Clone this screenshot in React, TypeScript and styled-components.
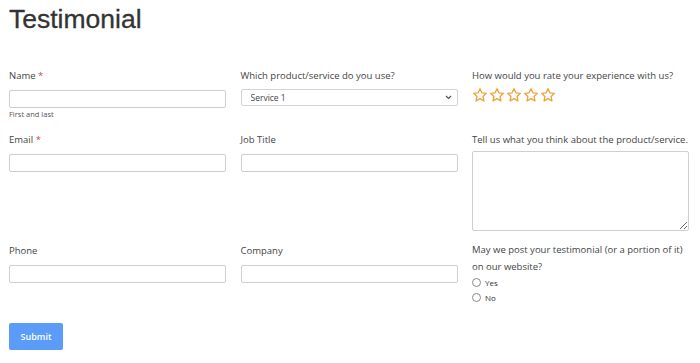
import React from "react";
import styled, { createGlobalStyle } from "styled-components";

const GlobalStyle = createGlobalStyle`
  html, body {
    margin: 0;
    padding: 0;
    background: #ffffff;
  }
  body {
    font-family: "Open Sans", "DejaVu Sans", sans-serif;
    color: #444;
  }
`;

const Star: React.FC = () => (
  <svg width="16" height="16" viewBox="0 0 24 24" fill="none" stroke="#f0a23a" strokeWidth="2" strokeLinejoin="round">
    <path d="M12 2.5l2.9 6.2 6.7.8-5 4.6 1.3 6.7L12 17.5l-5.9 3.3 1.3-6.7-5-4.6 6.7-.8z" />
  </svg>
);

export default function App() {
  return (
    <Page>
      <GlobalStyle />
      <Title>Testimonial</Title>
      <FormGrid>
        <Field>
          <Label>
            Name <Req>*</Req>
          </Label>
          <TextInput type="text" />
          <Help>First and last</Help>
        </Field>
        <Field>
          <Label>Which product/service do you use?</Label>
          <SelectWrap>
            <Select defaultValue="Service 1">
              <option>Service 1</option>
              <option>Service 2</option>
              <option>Service 3</option>
            </Select>
            <Chevron width="7" height="5" viewBox="0 0 7 5">
              <path d="M1 1l2.5 2.5L6 1" fill="none" stroke="#555" strokeWidth="1.2" />
            </Chevron>
          </SelectWrap>
        </Field>
        <Field>
          <Label>How would you rate your experience with us?</Label>
          <Stars>
            {[1, 2, 3, 4, 5].map((n) => (
              <Star key={n} />
            ))}
          </Stars>
        </Field>

        <Field>
          <Label>
            Email <Req>*</Req>
          </Label>
          <TextInput type="email" />
        </Field>
        <Field>
          <Label>Job Title</Label>
          <TextInput type="text" />
        </Field>
        <Field>
          <Label>Tell us what you think about the product/service.</Label>
          <TextArea />
        </Field>

        <Field>
          <Label>Phone</Label>
          <TextInput type="tel" />
        </Field>
        <Field>
          <Label>Company</Label>
          <TextInput type="text" />
        </Field>
        <Field>
          <LongLabel>May we post your testimonial (or a portion of it) on our website?</LongLabel>
          <RadioRow>
            <Radio type="radio" name="post" />
            Yes
          </RadioRow>
          <RadioRow>
            <Radio type="radio" name="post" />
            No
          </RadioRow>
        </Field>
      </FormGrid>
      <SubmitButton type="button">Submit</SubmitButton>
    </Page>
  );
}

const Page = styled.div`
  padding: 0 11px 12px 9px;
`;

const Title = styled.h1`
  margin: 0;
  padding-top: 2px;
  font-family: "Liberation Sans", Arial, sans-serif;
  font-weight: normal;
  font-size: 26.5px;
  line-height: 34px;
  color: #333;
  -webkit-text-stroke: 0.3px #333;
`;

const FormGrid = styled.div`
  display: grid;
  grid-template-columns: repeat(3, 1fr);
  column-gap: 14.5px;
  row-gap: 13px;
  align-items: start;
  margin-top: 33px;
`;

const Field = styled.div`
  display: flex;
  flex-direction: column;
`;

const Label = styled.label`
  font-size: 9.5px;
  line-height: 14px;
  color: #444;
`;

const LongLabel = styled(Label)`
  line-height: 17px;
  margin-top: -3px;
`;

const Req = styled.span`
  color: #c0504d;
`;

const TextInput = styled.input`
  box-sizing: border-box;
  height: 18px;
  margin: 7px 0 0;
  border: 1px solid #cfcfcf;
  border-radius: 2px;
  padding: 0 5px;
  font-size: 9px;
  font-family: inherit;
`;

const Help = styled.div`
  font-size: 7.5px;
  line-height: 12px;
  color: #555;
`;

const SelectWrap = styled.div`
  position: relative;
  display: flex;
  margin-top: 6px;
`;

const Select = styled.select`
  appearance: none;
  flex: 1;
  box-sizing: border-box;
  height: 17px;
  margin: 0;
  border: 1px solid #d4d4d4;
  border-radius: 2px;
  padding: 0 9px;
  font-size: 8.5px;
  font-family: inherit;
  color: #444;
  background: #fff;
`;

const Chevron = styled.svg`
  position: absolute;
  right: 6px;
  top: 6px;
  pointer-events: none;
`;

const Stars = styled.div`
  display: flex;
  gap: 1px;
  margin-top: 4px;
`;

const TextArea = styled.textarea`
  box-sizing: border-box;
  height: 80px;
  margin: 4px 0 0;
  border: 1px solid #cfcfcf;
  border-radius: 2px;
  font-family: inherit;
`;

const RadioRow = styled.label`
  display: flex;
  align-items: center;
  gap: 4px;
  font-size: 8px;
  line-height: 15px;
  color: #333;
`;

const Radio = styled.input`
  appearance: none;
  box-sizing: border-box;
  width: 9px;
  height: 9px;
  margin: 0;
  border: 1px solid #888;
  border-radius: 50%;
  background: #fff;
`;

const SubmitButton = styled.button`
  display: block;
  margin-top: 18px;
  width: 54px;
  height: 27px;
  border: none;
  border-radius: 2px;
  background: #5b9cf8;
  color: #fff;
  font-family: "Open Sans", "DejaVu Sans", sans-serif;
  font-weight: 600;
  font-size: 9px;
`;
